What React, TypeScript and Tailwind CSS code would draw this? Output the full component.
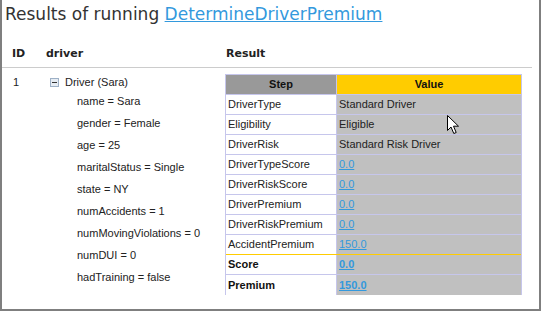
import React from 'react'

const drivers = [
  'name = Sara',
  'gender = Female',
  'age = 25',
  'maritalStatus = Single',
  'state = NY',
  'numAccidents = 1',
  'numMovingViolations = 0',
  'numDUI = 0',
  'hadTraining = false',
]

type Step = { step: string; value: string; link?: boolean; bold?: boolean; divider?: boolean; last?: boolean }

const steps: Step[] = [
  { step: 'DriverType', value: 'Standard Driver' },
  { step: 'Eligibility', value: 'Eligible' },
  { step: 'DriverRisk', value: 'Standard Risk Driver' },
  { step: 'DriverTypeScore', value: '0.0', link: true },
  { step: 'DriverRiskScore', value: '0.0', link: true },
  { step: 'DriverPremium', value: '0.0', link: true },
  { step: 'DriverRiskPremium', value: '0.0', link: true },
  { step: 'AccidentPremium', value: '150.0', link: true, divider: true },
  { step: 'Score', value: '0.0', link: true, bold: true },
  { step: 'Premium', value: '150.0', link: true, bold: true, last: true },
]

function Cursor() {
  return (
    <svg className="absolute left-[445px] top-[115px]" width="13" height="20" viewBox="0 0 13 20">
      <path d="M0.5 0.5 L0.5 15.5 L4 12 L6.8 18.5 L9.2 17.5 L6.5 11.2 L11.5 11.2 Z" fill="#fff" stroke="#000" strokeWidth="1" />
    </svg>
  )
}

export default function App() {
  return (
    <div className="relative w-[541px] h-[311px] bg-white border-x-2 border-b-2 border-[#7f7f7f] overflow-hidden font-['Liberation_Sans',Arial,sans-serif] text-[#222]">
      {/* Title */}
      <div className="pl-[3px] pt-[4px] h-[24px] leading-[20px] text-[17px] text-[#333] font-['DejaVu_Sans',Verdana,sans-serif] whitespace-nowrap">
        Results of running <a className="text-[#3399dd] underline">DetermineDriverPremium</a>
      </div>

      {/* Column headers */}
      <div className="flex mt-[20px] h-[20px] leading-[20px] text-[11px] font-bold text-[#222] font-['DejaVu_Sans',Verdana,sans-serif]">
        <div className="w-[44px] pl-[10px]">ID</div>
        <div className="w-[180px]">driver</div>
        <div>Result</div>
      </div>
      <div className="mt-[3px] h-px w-[530px] bg-[#cccccc]" />

      {/* Row */}
      <div className="flex pt-[6px] text-[11px]">
        <div className="w-[44px] pl-[11px] leading-[16px]">1</div>
        <div className="w-[179px]">
          <div className="flex items-center h-[16px] pl-[4px] gap-[6px]">
            <span className="flex items-center justify-center w-[9px] h-[9px] border border-[#9db0c6] bg-[#e6ecf3]">
              <span className="block w-[5px] h-px bg-[#333]" />
            </span>
            <span>Driver (Sara)</span>
          </div>
          {drivers.map((d) => (
            <div key={d} className="h-[22px] leading-[22px] pl-[31px] whitespace-nowrap">
              {d}
            </div>
          ))}
        </div>

        {/* Result table */}
        <div className="w-[297px] border-x border-t border-[#c6c6ec]">
          <div className="flex h-[20px] border-b border-[#c6c6ec] font-bold text-[#111]">
            <div className="w-[111px] border-r border-[#c6c6ec] bg-[#999999] flex items-center justify-center">Step</div>
            <div className="flex-1 bg-[#ffcc00] flex items-center justify-center">Value</div>
          </div>
          {steps.map((s) => (
            <div
              key={s.step}
              className={`flex h-[20px] ${s.last ? '' : 'border-b'} ${s.divider ? 'border-[#ffcc00]' : 'border-[#c6c6ec]'} ${s.bold ? 'font-bold text-[#111]' : ''}`}
            >
              <div className="w-[111px] border-r border-[#c6c6ec] bg-white pl-[2px] flex items-center">{s.step}</div>
              <div className="flex-1 bg-[#c0c0c0] pl-[2px] flex items-center">
                {s.link ? <a className="text-[#3399dd] underline">{s.value}</a> : s.value}
              </div>
            </div>
          ))}
        </div>
      </div>

      <Cursor />
    </div>
  )
}
